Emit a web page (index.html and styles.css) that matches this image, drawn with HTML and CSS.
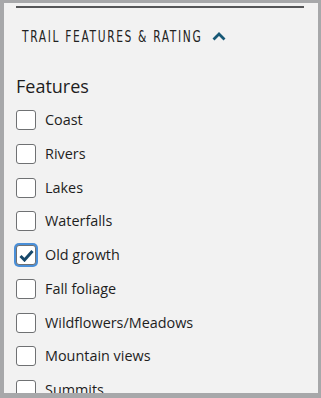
FILE: index.html
```html
<!DOCTYPE html>
<html>
<head>
<meta charset="utf-8">
<link rel="stylesheet" href="styles.css">
</head>
<body>
<div class="panel">
  <hr class="rule">
  <div class="section-head">
    <span class="section-title">TRAIL FEATURES &amp; RATING</span>
    <svg class="chev" width="14" height="9" viewBox="0 0 14 9"><path d="M1.5 7.5 L7 2 L12.5 7.5" fill="none" stroke="#175876" stroke-width="2.8"/></svg>
  </div>
  <h3 class="group-title">Features</h3>
  <ul class="options">
    <li class="opt"><span class="box"></span><span class="lbl">Coast</span></li>
    <li class="opt"><span class="box"></span><span class="lbl">Rivers</span></li>
    <li class="opt"><span class="box"></span><span class="lbl">Lakes</span></li>
    <li class="opt"><span class="box"></span><span class="lbl">Waterfalls</span></li>
    <li class="opt"><span class="box checked"><svg width="15" height="13" viewBox="0 0 15 13"><path d="M1.5 7 L5.5 11 L13.5 2" fill="none" stroke="#17486a" stroke-width="3"/></svg></span><span class="lbl">Old growth</span></li>
    <li class="opt"><span class="box"></span><span class="lbl">Fall foliage</span></li>
    <li class="opt"><span class="box"></span><span class="lbl">Wildflowers/Meadows</span></li>
    <li class="opt"><span class="box"></span><span class="lbl">Mountain views</span></li>
    <li class="opt"><span class="box"></span><span class="lbl">Summits</span></li>
  </ul>
</div>
</body>
</html>
```
FILE: styles.css
```css
html, body { height: 100%; }
body {
  margin: 0;
  background: #a7a8aa;
  box-sizing: border-box;
  padding: 3px 3px 5px 4px;
  overflow: hidden;
}
.panel {
  background: #f2f2f2;
  height: 100%;
  overflow: hidden;
  padding: 0 14px 0 12px;
  box-sizing: border-box;
}
.rule {
  margin: 0;
  padding: 0;
  border: 0;
  height: 2px;
  background: #555658;
  margin-top: 3px;
}
.section-head {
  display: flex;
  align-items: center;
  gap: 9px;
  padding-left: 6px;
  margin-top: 18px;
  height: 22px;
}
.section-title {
  display: inline-block;
  font-family: "DejaVu Sans", sans-serif;
  font-stretch: condensed;
  font-size: 16.5px;
  letter-spacing: 2.3px;
  color: #222;
  line-height: 22px;
  transform: scaleX(0.72);
  transform-origin: left center;
  margin-right: -70px;
  white-space: nowrap;
}
.chev { display: block; margin-top: -2px; }
.group-title {
  margin: 28px 0 0 0;
  font-family: "Open Sans", sans-serif;
  font-weight: 500;
  font-size: 18px;
  line-height: 20px;
  color: #1e1e1e;
}
.options {
  list-style: none;
  margin: 14px 0 0 0;
  padding: 0;
  display: flex;
  flex-direction: column;
  gap: 13.75px;
}
.opt {
  display: flex;
  align-items: center;
  gap: 9px;
  height: 20px;
}
.box {
  width: 20px;
  height: 20px;
  box-sizing: border-box;
  border: 1px solid #6f7173;
  border-radius: 3px;
  background: #fff;
  display: flex;
  align-items: center;
  justify-content: center;
  flex: none;
}
.box.checked {
  box-shadow: 0 0 0 2px #4a8fd8;
}
.lbl {
  font-family: "Open Sans", sans-serif;
  font-size: 14.4px;
  color: #1e1e1e;
  line-height: 20px;
}
```
